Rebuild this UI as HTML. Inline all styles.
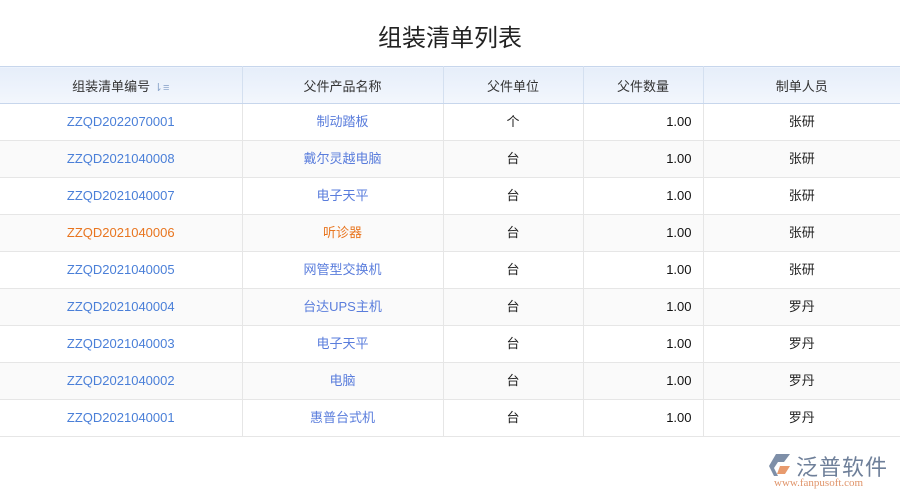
<!DOCTYPE html>
<html><head><meta charset="utf-8"><style>
body{margin:0;width:900px;height:500px;background:#fff;font-family:"Liberation Sans","Noto Sans CJK SC",sans-serif;position:relative;overflow:hidden}
h1{margin:0;position:absolute;top:22px;left:0;width:900px;text-align:center;font-size:24px;font-weight:normal;color:#222;line-height:34px}
table{position:absolute;top:66px;left:0;border-collapse:collapse;width:900px;font-size:13px;table-layout:fixed}
th{height:36px;padding:0;background:linear-gradient(#e6eefa,#f3f7fd);border-top:1px solid #c7d6ec;border-bottom:1px solid #c7d6ec;border-right:1px solid #d4e0f0;font-weight:normal;color:#333}
td{height:36px;border-bottom:1px solid #e6e6e6;border-right:1px solid #e6e6e6;text-align:center;color:#222;padding:0;line-height:16px}
tr:nth-child(odd) td{background:#fafafa}
td.l{color:#4a7fd8}td.n{color:#5a7ddc}
td.r{text-align:right;padding-right:11px;color:#111}
tr.o td.l,tr.o td.n{color:#e8751f}
th:last-child,td:last-child{border-right:none}
.logo{position:absolute;left:768px;top:452px}
</style></head><body>
<h1>组装清单列表</h1>
<table>
<colgroup><col style="width:242px"><col style="width:201px"><col style="width:140px"><col style="width:120px"><col style="width:197px"></colgroup>
<tr><th>组装清单编号 <span style="color:#8fa8cc;font-size:11px">⇂≡</span></th><th>父件产品名称</th><th>父件单位</th><th>父件数量</th><th>制单人员</th></tr>
<tr><td class="l">ZZQD2022070001</td><td class="n">制动踏板</td><td>个</td><td class="r">1.00</td><td>张研</td></tr>
<tr><td class="l">ZZQD2021040008</td><td class="n">戴尔灵越电脑</td><td>台</td><td class="r">1.00</td><td>张研</td></tr>
<tr><td class="l">ZZQD2021040007</td><td class="n">电子天平</td><td>台</td><td class="r">1.00</td><td>张研</td></tr>
<tr class="o"><td class="l">ZZQD2021040006</td><td class="n">听诊器</td><td>台</td><td class="r">1.00</td><td>张研</td></tr>
<tr><td class="l">ZZQD2021040005</td><td class="n">网管型交换机</td><td>台</td><td class="r">1.00</td><td>张研</td></tr>
<tr><td class="l">ZZQD2021040004</td><td class="n">台达UPS主机</td><td>台</td><td class="r">1.00</td><td>罗丹</td></tr>
<tr><td class="l">ZZQD2021040003</td><td class="n">电子天平</td><td>台</td><td class="r">1.00</td><td>罗丹</td></tr>
<tr><td class="l">ZZQD2021040002</td><td class="n">电脑</td><td>台</td><td class="r">1.00</td><td>罗丹</td></tr>
<tr><td class="l">ZZQD2021040001</td><td class="n">惠普台式机</td><td>台</td><td class="r">1.00</td><td>罗丹</td></tr>
</table>
<div class="logo">
<svg width="26" height="26" style="position:absolute;left:0;top:0" viewBox="0 0 26 26"><path d="M8 2h14l-6 8h-6l-4 6 4 8H6L1 14z" fill="#7e8fa8"/><path d="M12 14h10l-5 8h-8z" fill="#e89b6e"/></svg>
<div style="position:absolute;left:28px;top:-2px;font-size:22px;color:#6e7f99;white-space:nowrap;letter-spacing:1px">泛普软件</div>
<div style="position:absolute;left:6px;top:25px;font-size:11px;color:#e0946a;font-family:'Liberation Serif',serif;white-space:nowrap">www.fanpusoft.com</div>
</div>
</body></html>
